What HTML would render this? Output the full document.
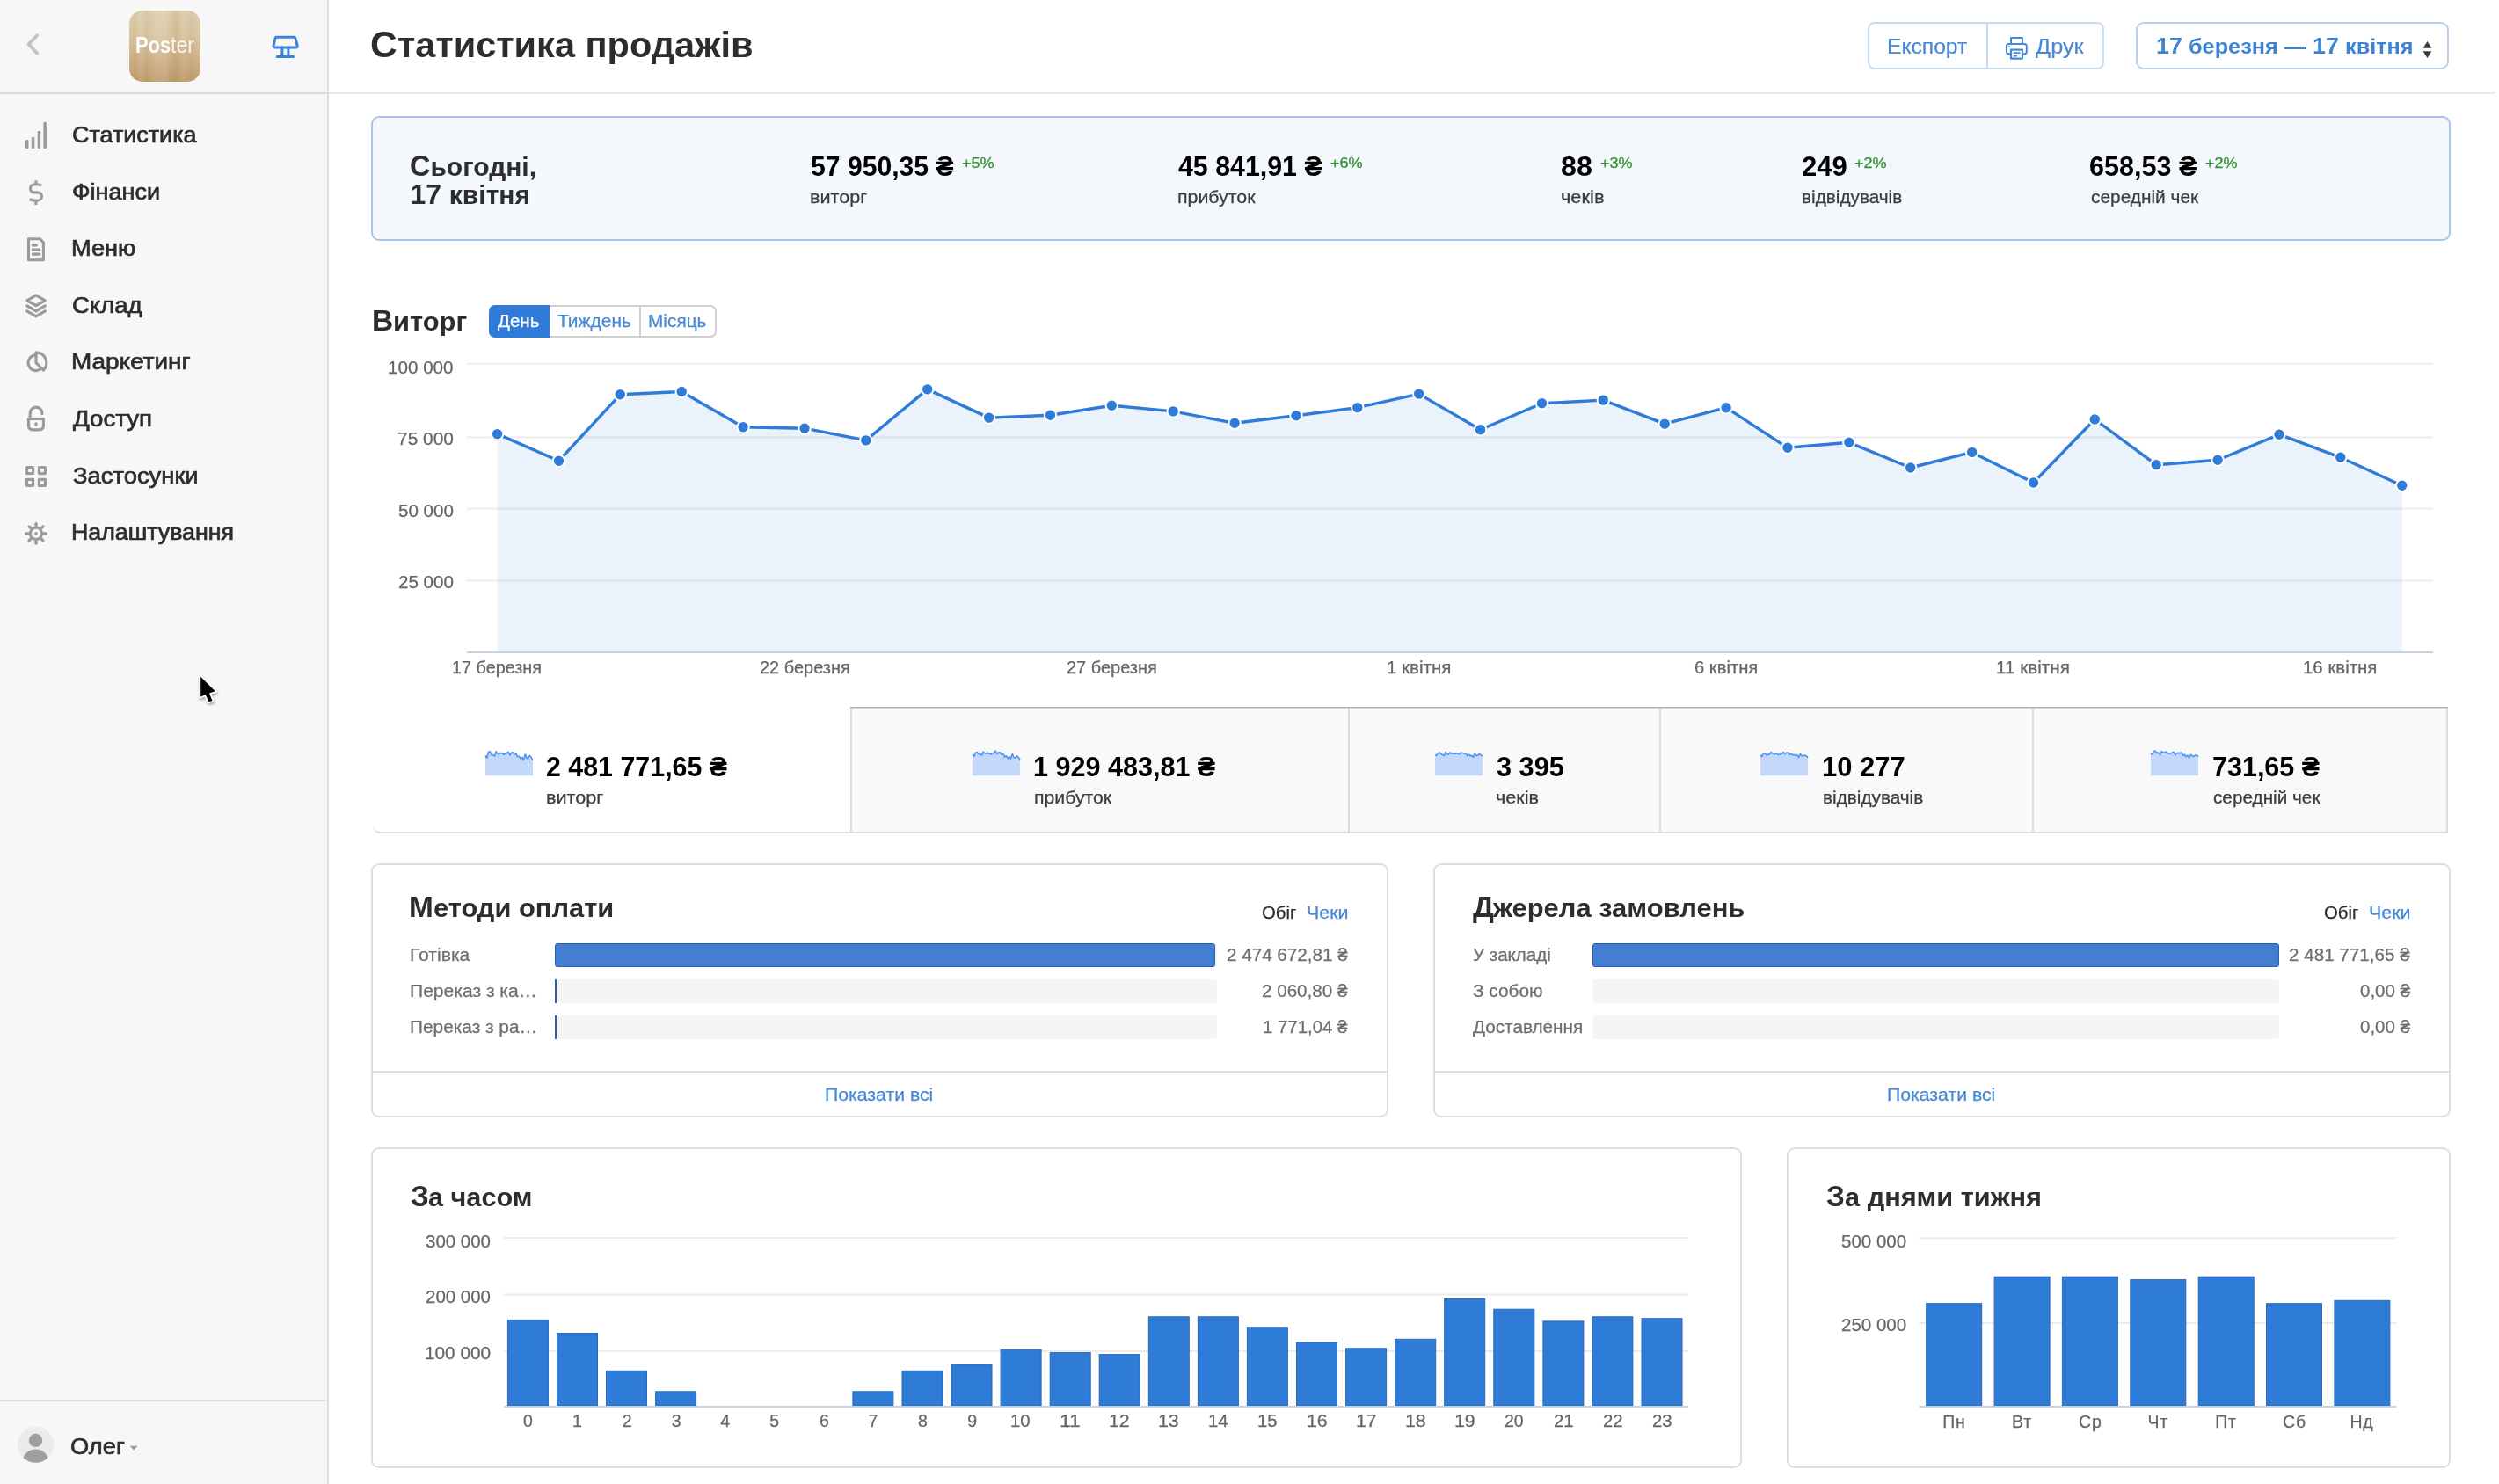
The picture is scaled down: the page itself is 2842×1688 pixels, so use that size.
<!DOCTYPE html>
<html lang="uk"><head><meta charset="utf-8"><title>Статистика продажів</title>
<style>
html,body{margin:0;padding:0;}
body{width:2842px;height:1688px;position:relative;overflow:hidden;background:#fff;font-family:"Liberation Sans",sans-serif;}
.t{position:absolute;white-space:pre;line-height:1;transform-origin:0 0;font-family:"Liberation Sans",sans-serif;}
svg{position:absolute;overflow:visible;}
</style></head><body>
<div style="position:absolute;left:0px;top:0px;width:372px;height:1688px;background:#f7f7f7;"></div>
<div style="position:absolute;left:372px;top:0px;width:2px;height:1688px;background:#dedede;"></div>
<div style="position:absolute;left:0px;top:105px;width:372px;height:2px;background:#dcdcdc;"></div>
<div style="position:absolute;left:0px;top:1592px;width:372px;height:2px;background:#dcdcdc;"></div>
<div style="position:absolute;left:374px;top:105px;width:2464px;height:2px;background:#ebebeb;"></div>
<svg style="left:0;top:0" width="372" height="105"><polyline points="42.2,40.2 32.6,50.4 42.2,60.6" fill="none" stroke="#c3c3c3" stroke-width="3.8" stroke-linecap="round" stroke-linejoin="round"/><g fill="none" stroke="#3b82de" stroke-width="3" stroke-linejoin="round" stroke-linecap="round"><path d="M314.6,42.2 L334.2,42.2 Q335.6,42.2 336,43.6 L338.2,52 Q338.6,54 336.6,54 L312.4,54 Q310.6,54 311,52 L313,43.6 Q313.4,42.2 314.6,42.2 Z"/><path d="M320.9,54 V64.5 M327.9,54 V64.5 M315.2,64.6 H333.6"/></g></svg>
<div style="position:absolute;left:147px;top:12px;width:81px;height:81px;border-radius:15px;overflow:hidden;background:linear-gradient(180deg,#dfcfb0 0%,#dac6a3 35%,#cfb38a 65%,#c19d6e 100%);"><div style="position:absolute;inset:0;background:linear-gradient(90deg,rgba(255,255,255,0) 0%,rgba(120,80,30,.06) 8%,rgba(255,255,255,.05) 16%,rgba(120,80,30,.05) 24%,rgba(255,255,255,.08) 38%,rgba(255,255,255,.1) 50%,rgba(120,80,30,.03) 58%,rgba(120,80,30,.10) 66%,rgba(255,255,255,.04) 76%,rgba(120,80,30,.05) 86%,rgba(255,255,255,.03) 100%);"></div></div>
<svg style="left:0;top:0" width="372" height="700"><g fill="#9b9b9b"><rect x="28.95" y="159.1" width="3.5" height="9.8" rx="1.2"/><rect x="35.8" y="155.8" width="3.5" height="13.1" rx="1.2"/><rect x="42.65" y="148.9" width="3.5" height="20" rx="1.2"/><rect x="49.4" y="138.8" width="3.5" height="30.1" rx="1.2"/></g><g stroke="#9b9b9b" stroke-width="3.1" fill="none" stroke-linecap="butt"><path d="M47.3,211 C44.5,209.95 42.5,209.75 40.5,209.75 C36.5,209.75 34.5,211.8 34.5,214.4 C34.5,217.2 36.6,218.9 40,218.9 L42,218.9 C45.4,218.9 47.45,220.7 47.45,223.5 C47.45,226.3 45.2,228.2 41.5,228.2 C38.5,228.2 36,227.7 33.6,226.8"/><path d="M40.9,205.2 V209.6 M40.9,228.4 V232.9"/></g><g stroke="#9b9b9b" stroke-width="3.1" fill="none" stroke-linejoin="round" stroke-linecap="round"><path d="M32.5,271.7 H45.6 L49.4,275.9 V295.8 H32.5 Z"/><path d="M37.2,278.9 H41.4 M37.2,284.1 H44.7 M37.2,289.1 H44.7"/></g><g stroke="#9b9b9b" stroke-width="3.2" fill="none" stroke-linejoin="round" stroke-linecap="round"><path d="M41,335.8 L51.3,341.8 L41,347.7 L30.7,341.8 Z"/><path d="M30.7,347.9 L41,353.9 L51.3,347.9"/><path d="M30.7,353.9 L41,359.9 L51.3,353.9"/></g><g stroke="#9b9b9b" stroke-width="3.2" fill="none" stroke-linejoin="round" stroke-linecap="round"><path d="M47.2,418.9 A8.8,8.8 0 1 1 41,403.9"/><path d="M41,412.7 V400.9 A11.9,11.9 0 0 1 49.4,421.1 Z"/></g><g stroke="#9b9b9b" stroke-width="3.2" fill="none" stroke-linejoin="round" stroke-linecap="round"><path d="M34.2,476.3 V469.9 A6.85,6.85 0 0 1 47.9,469.9 V470.6"/><path d="M32.5,476.5 H49.4 V484 Q49.4,488.8 44.6,488.8 H37.3 Q32.5,488.8 32.5,484 Z"/></g><ellipse cx="41" cy="482.7" rx="1.8" ry="2.4" fill="#9b9b9b"/><rect x="28.95" y="530" width="10.2" height="10.2" rx="1.7" fill="#9b9b9b"/><rect x="32.1" y="533.15" width="3.9" height="3.9" rx="0.4" fill="#f7f7f7"/><rect x="28.95" y="543.8" width="10.2" height="10.2" rx="1.7" fill="#9b9b9b"/><rect x="32.1" y="546.9499999999999" width="3.9" height="3.9" rx="0.4" fill="#f7f7f7"/><rect x="42.8" y="530" width="10.2" height="10.2" rx="1.7" fill="#9b9b9b"/><rect x="45.949999999999996" y="533.15" width="3.9" height="3.9" rx="0.4" fill="#f7f7f7"/><rect x="42.8" y="543.8" width="10.2" height="10.2" rx="1.7" fill="#9b9b9b"/><rect x="45.949999999999996" y="546.9499999999999" width="3.9" height="3.9" rx="0.4" fill="#f7f7f7"/><g stroke="#9b9b9b" fill="none"><circle cx="41" cy="606.9" r="6.6" stroke-width="3"/><path d="M49.20,606.90 L52.30,606.90 M46.80,612.70 L48.99,614.89 M41.00,615.10 L41.00,618.20 M35.20,612.70 L33.01,614.89 M32.80,606.90 L29.70,606.90 M35.20,601.10 L33.01,598.91 M41.00,598.70 L41.00,595.60 M46.80,601.10 L48.99,598.91 " stroke-width="3.3" stroke-linecap="round"/></g><circle cx="41" cy="606.9" r="1.8" fill="#9b9b9b"/></svg>
<svg style="left:0;top:1594px" width="372" height="94"><defs><clipPath id="av"><circle cx="40.5" cy="49.2" r="20.5"/></clipPath></defs><circle cx="40.5" cy="49.2" r="20.5" fill="#ebebeb"/><g clip-path="url(#av)" fill="#9e9e9e"><circle cx="40.5" cy="44.4" r="7.7"/><ellipse cx="40.5" cy="68" rx="14.6" ry="13.4"/></g><path d="M147.6,50.8 H156.6 L152.1,55.6 Z" fill="#9a9a9a"/></svg>
<svg style="left:200px;top:750px" width="80" height="80"><defs><filter id="cs" x="-50%" y="-50%" width="200%" height="200%"><feGaussianBlur stdDeviation="1.6"/></filter></defs><path d="M28.2,19.8 V42.7 L33.6,39.9 L37.3,48.1 L41.5,47.2 L38,38.4 L44.8,36.3 Z" transform="translate(0.6,2.2)" fill="#000" opacity=".35" filter="url(#cs)" stroke="#000" stroke-width="3"/><path d="M28.2,19.8 V42.7 L33.6,39.9 L37.3,48.1 L41.5,47.2 L38,38.4 L44.8,36.3 Z" fill="#000" stroke="#fff" stroke-width="3.6" stroke-linejoin="round"/><path d="M28.2,19.8 V42.7 L33.6,39.9 L37.3,48.1 L41.5,47.2 L38,38.4 L44.8,36.3 Z" fill="#000"/></svg>
<div style="position:absolute;left:2124px;top:25px;width:265px;height:50px;border:2px solid #c7dbf3;border-radius:8px;"></div>
<div style="position:absolute;left:2259px;top:27px;width:2px;height:50px;background:#c7dbf3;"></div>
<svg style="left:2278px;top:38px" width="32" height="34"><g fill="none" stroke="#4788d8" stroke-width="2" stroke-linejoin="round"><path d="M9,12 V5 H22 V12"/><path d="M9,23.3 H6.6 Q4,23.3 4,20.7 V14.6 Q4,12 6.6,12 H24.2 Q26.8,12 26.8,14.6 V20.7 Q26.8,23.3 24.2,23.3 H22"/><path d="M9,18.6 H22 V28.6 H9 Z" stroke-width="2.2"/><path d="M11.6,22.2 H19.6 M11.6,25.6 H16" stroke-width="1.7"/></g><circle cx="7.1" cy="15.3" r="1.05" fill="#3f7fd0"/></svg>
<div style="position:absolute;left:2429px;top:25px;width:352px;height:50px;border:2px solid #b9d0ec;border-radius:9px;"></div>
<svg style="left:2750px;top:40px" width="24" height="32"><path d="M5.6,14.8 L10.5,7 L15.4,14.8 Z M5.6,18.2 L10.5,26 L15.4,18.2 Z" fill="#3a3a3a"/></svg>
<div style="position:absolute;left:422px;top:132px;width:2361px;height:138px;border:2px solid #a9c4ea;border-radius:9px;background:#f4f7fc;"></div>
<div style="position:absolute;left:556px;top:347px;width:255px;height:33px;border:2px solid #cfcfcf;border-radius:7px;background:#fff;"></div>
<div style="position:absolute;left:727px;top:349px;width:2px;height:33px;background:#cfcfcf;"></div>
<div style="position:absolute;left:556px;top:347px;width:69px;height:37px;background:#2f7bd9;border-radius:7px 0 0 7px;"></div>
<svg style="left:0;top:0" width="2842" height="800"><rect x="531" y="412.8" width="2236" height="2" fill="#ececec"/><rect x="531" y="496.4" width="2236" height="2" fill="#ececec"/><rect x="531" y="577.7" width="2236" height="2" fill="#ececec"/><rect x="531" y="659.5" width="2236" height="2" fill="#ececec"/><polygon points="565.6,741 565.6,493.6 635.5,524.2 705.3,448.8 775.2,445.5 845.1,485.7 915.0,487.2 984.8,500.9 1054.7,442.9 1124.6,475.1 1194.5,472.2 1264.3,461.2 1334.2,467.9 1404.1,481.3 1474.0,472.7 1543.8,463.6 1613.7,448.1 1683.6,488.8 1753.5,458.8 1823.3,455.1 1893.2,482.1 1963.1,463.7 2033.0,509.3 2102.8,503.3 2172.7,532.0 2242.6,514.4 2312.5,549.0 2382.3,477.0 2452.2,528.7 2522.1,523.3 2592.0,494.2 2661.8,520.3 2731.7,552.3 2731.7,741" fill="#2f7bd9" fill-opacity="0.10"/><rect x="531" y="741" width="2236" height="2" fill="#c4d3e3"/><polyline points="565.6,493.6 635.5,524.2 705.3,448.8 775.2,445.5 845.1,485.7 915.0,487.2 984.8,500.9 1054.7,442.9 1124.6,475.1 1194.5,472.2 1264.3,461.2 1334.2,467.9 1404.1,481.3 1474.0,472.7 1543.8,463.6 1613.7,448.1 1683.6,488.8 1753.5,458.8 1823.3,455.1 1893.2,482.1 1963.1,463.7 2033.0,509.3 2102.8,503.3 2172.7,532.0 2242.6,514.4 2312.5,549.0 2382.3,477.0 2452.2,528.7 2522.1,523.3 2592.0,494.2 2661.8,520.3 2731.7,552.3" fill="none" stroke="#2f7bd9" stroke-width="3.4" stroke-linejoin="round" stroke-linecap="round"/><circle cx="565.6" cy="493.6" r="6.7" fill="#2f7bd9" stroke="#fff" stroke-width="2"/><circle cx="635.5" cy="524.2" r="6.7" fill="#2f7bd9" stroke="#fff" stroke-width="2"/><circle cx="705.3" cy="448.8" r="6.7" fill="#2f7bd9" stroke="#fff" stroke-width="2"/><circle cx="775.2" cy="445.5" r="6.7" fill="#2f7bd9" stroke="#fff" stroke-width="2"/><circle cx="845.1" cy="485.7" r="6.7" fill="#2f7bd9" stroke="#fff" stroke-width="2"/><circle cx="915.0" cy="487.2" r="6.7" fill="#2f7bd9" stroke="#fff" stroke-width="2"/><circle cx="984.8" cy="500.9" r="6.7" fill="#2f7bd9" stroke="#fff" stroke-width="2"/><circle cx="1054.7" cy="442.9" r="6.7" fill="#2f7bd9" stroke="#fff" stroke-width="2"/><circle cx="1124.6" cy="475.1" r="6.7" fill="#2f7bd9" stroke="#fff" stroke-width="2"/><circle cx="1194.5" cy="472.2" r="6.7" fill="#2f7bd9" stroke="#fff" stroke-width="2"/><circle cx="1264.3" cy="461.2" r="6.7" fill="#2f7bd9" stroke="#fff" stroke-width="2"/><circle cx="1334.2" cy="467.9" r="6.7" fill="#2f7bd9" stroke="#fff" stroke-width="2"/><circle cx="1404.1" cy="481.3" r="6.7" fill="#2f7bd9" stroke="#fff" stroke-width="2"/><circle cx="1474.0" cy="472.7" r="6.7" fill="#2f7bd9" stroke="#fff" stroke-width="2"/><circle cx="1543.8" cy="463.6" r="6.7" fill="#2f7bd9" stroke="#fff" stroke-width="2"/><circle cx="1613.7" cy="448.1" r="6.7" fill="#2f7bd9" stroke="#fff" stroke-width="2"/><circle cx="1683.6" cy="488.8" r="6.7" fill="#2f7bd9" stroke="#fff" stroke-width="2"/><circle cx="1753.5" cy="458.8" r="6.7" fill="#2f7bd9" stroke="#fff" stroke-width="2"/><circle cx="1823.3" cy="455.1" r="6.7" fill="#2f7bd9" stroke="#fff" stroke-width="2"/><circle cx="1893.2" cy="482.1" r="6.7" fill="#2f7bd9" stroke="#fff" stroke-width="2"/><circle cx="1963.1" cy="463.7" r="6.7" fill="#2f7bd9" stroke="#fff" stroke-width="2"/><circle cx="2033.0" cy="509.3" r="6.7" fill="#2f7bd9" stroke="#fff" stroke-width="2"/><circle cx="2102.8" cy="503.3" r="6.7" fill="#2f7bd9" stroke="#fff" stroke-width="2"/><circle cx="2172.7" cy="532.0" r="6.7" fill="#2f7bd9" stroke="#fff" stroke-width="2"/><circle cx="2242.6" cy="514.4" r="6.7" fill="#2f7bd9" stroke="#fff" stroke-width="2"/><circle cx="2312.5" cy="549.0" r="6.7" fill="#2f7bd9" stroke="#fff" stroke-width="2"/><circle cx="2382.3" cy="477.0" r="6.7" fill="#2f7bd9" stroke="#fff" stroke-width="2"/><circle cx="2452.2" cy="528.7" r="6.7" fill="#2f7bd9" stroke="#fff" stroke-width="2"/><circle cx="2522.1" cy="523.3" r="6.7" fill="#2f7bd9" stroke="#fff" stroke-width="2"/><circle cx="2592.0" cy="494.2" r="6.7" fill="#2f7bd9" stroke="#fff" stroke-width="2"/><circle cx="2661.8" cy="520.3" r="6.7" fill="#2f7bd9" stroke="#fff" stroke-width="2"/><circle cx="2731.7" cy="552.3" r="6.7" fill="#2f7bd9" stroke="#fff" stroke-width="2"/></svg>
<div style="position:absolute;left:967px;top:804px;width:1817px;height:144px;background:#f9f9f9;"></div>
<div style="position:absolute;left:967px;top:804px;width:1817px;height:2px;background:linear-gradient(#a9a9a9,#d6d6d6);"></div>
<div style="position:absolute;left:424px;top:940px;width:560px;height:6px;border-bottom:2px solid #dcdcdc;border-left:0;border-bottom-left-radius:8px;"></div>
<div style="position:absolute;left:967px;top:946px;width:1817px;height:2px;background:#dcdcdc;"></div>
<div style="position:absolute;left:967px;top:806px;width:2px;height:141px;background:#dcdcdc;"></div>
<div style="position:absolute;left:1533px;top:806px;width:2px;height:141px;background:#dcdcdc;"></div>
<div style="position:absolute;left:1886.5px;top:806px;width:2px;height:141px;background:#dcdcdc;"></div>
<div style="position:absolute;left:2311px;top:806px;width:2px;height:141px;background:#dcdcdc;"></div>
<div style="position:absolute;left:2782px;top:806px;width:2px;height:141px;background:#dcdcdc;"></div>
<svg style="left:552px;top:852.5px" width="56" height="30"><polygon points="0,29.3 0.0,6.4 1.7,9.2 3.5,2.2 5.2,1.9 7.0,5.7 8.7,5.8 10.5,7.1 12.2,1.7 13.9,4.7 15.7,4.4 17.4,3.4 19.2,4.0 20.9,5.2 22.6,4.5 24.4,3.6 26.1,2.2 27.9,5.9 29.6,3.2 31.4,2.8 33.1,5.3 34.8,3.6 36.6,7.8 38.3,7.3 40.1,9.9 41.8,8.3 43.5,11.5 45.3,4.8 47.0,9.6 48.8,9.1 50.5,6.4 52.3,8.8 54.0,11.8 54.0,29.3" fill="#c4d8fb"/><polyline points="0.0,6.4 1.7,9.2 3.5,2.2 5.2,1.9 7.0,5.7 8.7,5.8 10.5,7.1 12.2,1.7 13.9,4.7 15.7,4.4 17.4,3.4 19.2,4.0 20.9,5.2 22.6,4.5 24.4,3.6 26.1,2.2 27.9,5.9 29.6,3.2 31.4,2.8 33.1,5.3 34.8,3.6 36.6,7.8 38.3,7.3 40.1,9.9 41.8,8.3 43.5,11.5 45.3,4.8 47.0,9.6 48.8,9.1 50.5,6.4 52.3,8.8 54.0,11.8" fill="none" stroke="#5596f0" stroke-width="1.7" stroke-linejoin="round"/></svg>
<svg style="left:1106px;top:852.5px" width="56" height="30"><polygon points="0,29.3 0.0,5.0 1.7,7.6 3.5,3.0 5.2,2.7 7.0,4.6 8.7,4.9 10.5,6.2 12.2,2.1 13.9,4.2 15.7,3.9 17.4,3.1 19.2,4.4 20.9,5.0 22.6,4.4 24.4,3.0 26.1,1.2 27.9,4.6 29.6,2.9 31.4,2.8 33.1,5.4 34.8,4.3 36.6,8.1 38.3,6.8 40.1,9.5 41.8,7.9 43.5,9.8 45.3,4.5 47.0,8.7 48.8,8.9 50.5,6.9 52.3,8.5 54.0,11.5 54.0,29.3" fill="#c4d8fb"/><polyline points="0.0,5.0 1.7,7.6 3.5,3.0 5.2,2.7 7.0,4.6 8.7,4.9 10.5,6.2 12.2,2.1 13.9,4.2 15.7,3.9 17.4,3.1 19.2,4.4 20.9,5.0 22.6,4.4 24.4,3.0 26.1,1.2 27.9,4.6 29.6,2.9 31.4,2.8 33.1,5.4 34.8,4.3 36.6,8.1 38.3,6.8 40.1,9.5 41.8,7.9 43.5,9.8 45.3,4.5 47.0,8.7 48.8,8.9 50.5,6.9 52.3,8.5 54.0,11.5" fill="none" stroke="#5596f0" stroke-width="1.7" stroke-linejoin="round"/></svg>
<svg style="left:1632px;top:852.5px" width="56" height="30"><polygon points="0,29.3 0.0,5.7 1.7,6.4 3.5,3.6 5.2,3.0 7.0,4.6 8.7,5.8 10.5,6.4 12.2,2.4 13.9,4.9 15.7,4.8 17.4,2.9 19.2,4.2 20.9,4.0 22.6,4.4 24.4,3.7 26.1,4.0 27.9,4.7 29.6,3.0 31.4,3.5 33.1,4.2 34.8,3.6 36.6,6.7 38.3,5.1 40.1,6.6 41.8,6.4 43.5,8.4 45.3,3.8 47.0,6.7 48.8,6.0 50.5,4.5 52.3,5.9 54.0,6.8 54.0,29.3" fill="#c4d8fb"/><polyline points="0.0,5.7 1.7,6.4 3.5,3.6 5.2,3.0 7.0,4.6 8.7,5.8 10.5,6.4 12.2,2.4 13.9,4.9 15.7,4.8 17.4,2.9 19.2,4.2 20.9,4.0 22.6,4.4 24.4,3.7 26.1,4.0 27.9,4.7 29.6,3.0 31.4,3.5 33.1,4.2 34.8,3.6 36.6,6.7 38.3,5.1 40.1,6.6 41.8,6.4 43.5,8.4 45.3,3.8 47.0,6.7 48.8,6.0 50.5,4.5 52.3,5.9 54.0,6.8" fill="none" stroke="#5596f0" stroke-width="1.7" stroke-linejoin="round"/></svg>
<svg style="left:2001.6px;top:852.5px" width="56" height="30"><polygon points="0,29.3 0.0,5.9 1.7,7.6 3.5,3.6 5.2,3.9 7.0,5.9 8.7,5.3 10.5,4.9 12.2,2.5 13.9,4.1 15.7,5.0 17.4,3.9 19.2,4.7 20.9,5.5 22.6,5.2 24.4,4.6 26.1,2.5 27.9,4.6 29.6,3.2 31.4,3.1 33.1,5.5 34.8,4.4 36.6,5.9 38.3,5.4 40.1,6.5 41.8,5.6 43.5,8.8 45.3,4.4 47.0,6.7 48.8,6.8 50.5,6.1 52.3,6.7 54.0,8.9 54.0,29.3" fill="#c4d8fb"/><polyline points="0.0,5.9 1.7,7.6 3.5,3.6 5.2,3.9 7.0,5.9 8.7,5.3 10.5,4.9 12.2,2.5 13.9,4.1 15.7,5.0 17.4,3.9 19.2,4.7 20.9,5.5 22.6,5.2 24.4,4.6 26.1,2.5 27.9,4.6 29.6,3.2 31.4,3.1 33.1,5.5 34.8,4.4 36.6,5.9 38.3,5.4 40.1,6.5 41.8,5.6 43.5,8.8 45.3,4.4 47.0,6.7 48.8,6.8 50.5,6.1 52.3,6.7 54.0,8.9" fill="none" stroke="#5596f0" stroke-width="1.7" stroke-linejoin="round"/></svg>
<svg style="left:2446px;top:852.5px" width="56" height="30"><polygon points="0,29.3 0.0,3.8 1.7,5.1 3.5,1.3 5.2,1.2 7.0,3.3 8.7,3.1 10.5,5.6 12.2,1.9 13.9,2.6 15.7,3.1 17.4,2.1 19.2,4.0 20.9,4.1 22.6,4.1 24.4,3.1 26.1,2.3 27.9,5.5 29.6,3.7 31.4,3.4 33.1,3.6 34.8,3.0 36.6,6.6 38.3,5.1 40.1,7.9 41.8,6.1 43.5,8.9 45.3,5.5 47.0,6.5 48.8,7.6 50.5,6.1 52.3,6.0 54.0,7.9 54.0,29.3" fill="#c4d8fb"/><polyline points="0.0,3.8 1.7,5.1 3.5,1.3 5.2,1.2 7.0,3.3 8.7,3.1 10.5,5.6 12.2,1.9 13.9,2.6 15.7,3.1 17.4,2.1 19.2,4.0 20.9,4.1 22.6,4.1 24.4,3.1 26.1,2.3 27.9,5.5 29.6,3.7 31.4,3.4 33.1,3.6 34.8,3.0 36.6,6.6 38.3,5.1 40.1,7.9 41.8,6.1 43.5,8.9 45.3,5.5 47.0,6.5 48.8,7.6 50.5,6.1 52.3,6.0 54.0,7.9" fill="none" stroke="#5596f0" stroke-width="1.7" stroke-linejoin="round"/></svg>
<div style="position:absolute;left:422px;top:982px;width:1153px;height:285px;border:2px solid #dddddd;border-radius:9px;background:#fff;"></div>
<div style="position:absolute;left:631px;top:1073px;width:752.5px;height:27px;background:#f5f5f5;border-radius:3px;"></div>
<div style="position:absolute;left:631px;top:1073px;width:748.5px;height:25px;background:#427fd3;border:1px solid #2d5ea6;border-radius:3px;"></div>
<div style="position:absolute;left:631px;top:1114px;width:752.5px;height:27px;background:#f5f5f5;border-radius:3px;"></div>
<div style="position:absolute;left:631px;top:1114px;width:2.4px;height:27px;background:#2d5ea6;"></div>
<div style="position:absolute;left:631px;top:1155px;width:752.5px;height:27px;background:#f5f5f5;border-radius:3px;"></div>
<div style="position:absolute;left:631px;top:1155px;width:2.4px;height:27px;background:#2d5ea6;"></div>
<div style="position:absolute;left:424px;top:1218px;width:1153px;height:2px;background:#dddddd;"></div>
<div style="position:absolute;left:1630px;top:982px;width:1153px;height:285px;border:2px solid #dddddd;border-radius:9px;background:#fff;"></div>
<div style="position:absolute;left:1811px;top:1073px;width:781.0px;height:27px;background:#f5f5f5;border-radius:3px;"></div>
<div style="position:absolute;left:1811px;top:1073px;width:778.5px;height:25px;background:#427fd3;border:1px solid #2d5ea6;border-radius:3px;"></div>
<div style="position:absolute;left:1811px;top:1114px;width:781.0px;height:27px;background:#f5f5f5;border-radius:3px;"></div>
<div style="position:absolute;left:1811px;top:1155px;width:781.0px;height:27px;background:#f5f5f5;border-radius:3px;"></div>
<div style="position:absolute;left:1632px;top:1218px;width:1153px;height:2px;background:#dddddd;"></div>
<div style="position:absolute;left:422px;top:1305px;width:1555px;height:361px;border:2px solid #dddddd;border-radius:9px;background:#fff;"></div>
<div style="position:absolute;left:2032px;top:1305px;width:751px;height:361px;border:2px solid #dddddd;border-radius:9px;background:#fff;"></div>
<svg style="left:0;top:1300px" width="2842" height="388"><rect x="573.0" y="107.0" width="1347.0" height="2.0" fill="#ececec" /><rect x="573.0" y="171.6" width="1347.0" height="2.0" fill="#ececec" /><rect x="573.0" y="236.0" width="1347.0" height="2.0" fill="#ececec" /><rect x="577.4" y="201.4" width="46.0" height="97.6" fill="#2f7bd8" stroke="#2c69b6" stroke-width="1"/><rect x="633.5" y="216.5" width="46.0" height="82.5" fill="#2f7bd8" stroke="#2c69b6" stroke-width="1"/><rect x="689.5" y="259.3" width="46.0" height="39.7" fill="#2f7bd8" stroke="#2c69b6" stroke-width="1"/><rect x="745.6" y="282.8" width="46.0" height="16.2" fill="#2f7bd8" stroke="#2c69b6" stroke-width="1"/><rect x="969.9" y="282.8" width="46.0" height="16.2" fill="#2f7bd8" stroke="#2c69b6" stroke-width="1"/><rect x="1026.0" y="259.3" width="46.0" height="39.7" fill="#2f7bd8" stroke="#2c69b6" stroke-width="1"/><rect x="1082.0" y="252.6" width="46.0" height="46.4" fill="#2f7bd8" stroke="#2c69b6" stroke-width="1"/><rect x="1138.1" y="235.3" width="46.0" height="63.7" fill="#2f7bd8" stroke="#2c69b6" stroke-width="1"/><rect x="1194.2" y="238.6" width="46.0" height="60.4" fill="#2f7bd8" stroke="#2c69b6" stroke-width="1"/><rect x="1250.2" y="240.6" width="46.0" height="58.4" fill="#2f7bd8" stroke="#2c69b6" stroke-width="1"/><rect x="1306.3" y="197.8" width="46.0" height="101.2" fill="#2f7bd8" stroke="#2c69b6" stroke-width="1"/><rect x="1362.4" y="197.8" width="46.0" height="101.2" fill="#2f7bd8" stroke="#2c69b6" stroke-width="1"/><rect x="1418.4" y="209.8" width="46.0" height="89.2" fill="#2f7bd8" stroke="#2c69b6" stroke-width="1"/><rect x="1474.5" y="226.9" width="46.0" height="72.1" fill="#2f7bd8" stroke="#2c69b6" stroke-width="1"/><rect x="1530.6" y="233.8" width="46.0" height="65.2" fill="#2f7bd8" stroke="#2c69b6" stroke-width="1"/><rect x="1586.7" y="223.3" width="46.0" height="75.7" fill="#2f7bd8" stroke="#2c69b6" stroke-width="1"/><rect x="1642.7" y="177.4" width="46.0" height="121.6" fill="#2f7bd8" stroke="#2c69b6" stroke-width="1"/><rect x="1698.8" y="189.2" width="46.0" height="109.8" fill="#2f7bd8" stroke="#2c69b6" stroke-width="1"/><rect x="1754.9" y="202.9" width="46.0" height="96.1" fill="#2f7bd8" stroke="#2c69b6" stroke-width="1"/><rect x="1810.9" y="197.8" width="46.0" height="101.2" fill="#2f7bd8" stroke="#2c69b6" stroke-width="1"/><rect x="1867.0" y="199.7" width="46.0" height="99.3" fill="#2f7bd8" stroke="#2c69b6" stroke-width="1"/><rect x="573.0" y="299.0" width="1347.0" height="2.0" fill="#c4d3e3" /><rect x="2183.0" y="107.2" width="542.5" height="2.0" fill="#ececec" /><rect x="2183.0" y="204.0" width="542.5" height="2.0" fill="#ececec" /><rect x="2190.7" y="182.7" width="63.0" height="116.3" fill="#2f7bd8" stroke="#2c69b6" stroke-width="1"/><rect x="2268.1" y="152.2" width="63.0" height="146.8" fill="#2f7bd8" stroke="#2c69b6" stroke-width="1"/><rect x="2345.4" y="152.2" width="63.0" height="146.8" fill="#2f7bd8" stroke="#2c69b6" stroke-width="1"/><rect x="2422.8" y="155.6" width="63.0" height="143.4" fill="#2f7bd8" stroke="#2c69b6" stroke-width="1"/><rect x="2500.2" y="152.2" width="63.0" height="146.8" fill="#2f7bd8" stroke="#2c69b6" stroke-width="1"/><rect x="2577.5" y="182.7" width="63.0" height="116.3" fill="#2f7bd8" stroke="#2c69b6" stroke-width="1"/><rect x="2654.9" y="179.3" width="63.0" height="119.7" fill="#2f7bd8" stroke="#2c69b6" stroke-width="1"/><rect x="2183.0" y="299.0" width="542.5" height="2.0" fill="#c4d3e3" /></svg>
<div id="tx" style="position:absolute;left:0;top:0;width:2842px;height:1688px;will-change:transform;">
<span class="t" style="left:154.18px;top:38px;font-size:26.5px;color:#fff;font-weight:700;transform:scaleX(0.8237);">Pos</span>
<span class="t" style="left:194.40px;top:38px;font-size:26px;color:rgba(255,255,255,.85);transform:scaleX(0.8930);">ter</span>
<span class="t" style="left:82.43px;top:140px;font-size:26px;color:#2d2d2d;transform:scaleX(1.0366);-webkit-text-stroke:0.7px #2d2d2d;">Статистика</span>
<span class="t" style="left:82.42px;top:205px;font-size:26px;color:#2d2d2d;transform:scaleX(1.0390);-webkit-text-stroke:0.7px #2d2d2d;">Фінанси</span>
<span class="t" style="left:81.38px;top:269px;font-size:26px;color:#2d2d2d;transform:scaleX(1.0443);-webkit-text-stroke:0.7px #2d2d2d;">Меню</span>
<span class="t" style="left:82.41px;top:334px;font-size:26px;color:#2d2d2d;transform:scaleX(1.0579);-webkit-text-stroke:0.7px #2d2d2d;">Склад</span>
<span class="t" style="left:81.33px;top:398px;font-size:26px;color:#2d2d2d;transform:scaleX(1.0736);-webkit-text-stroke:0.7px #2d2d2d;">Маркетинг</span>
<span class="t" style="left:83.47px;top:463px;font-size:26px;color:#2d2d2d;transform:scaleX(1.0646);-webkit-text-stroke:0.7px #2d2d2d;">Доступ</span>
<span class="t" style="left:83.47px;top:528px;font-size:26px;color:#2d2d2d;transform:scaleX(1.0529);-webkit-text-stroke:0.7px #2d2d2d;">Застосунки</span>
<span class="t" style="left:81.40px;top:592px;font-size:26px;color:#2d2d2d;transform:scaleX(1.0298);-webkit-text-stroke:0.7px #2d2d2d;">Налаштування</span>
<span class="t" style="left:80.12px;top:1632px;font-size:26px;color:#2d2d2d;transform:scaleX(1.0470);-webkit-text-stroke:0.7px #2d2d2d;">Олег</span>
<span class="t" style="left:421.39px;top:30px;font-size:42.0px;color:#2d2d2d;font-weight:700;transform:scaleX(1.0119);">С</span>
<span class="t" style="left:452.08px;top:31px;font-size:41px;color:#2d2d2d;font-weight:700;transform:scaleX(1.0119);">татистика продажів</span>
<span class="t" style="left:2146.28px;top:41px;font-size:24px;color:#4788d8;transform:scaleX(1.0268);-webkit-text-stroke:0.2px #4788d8;">Експорт</span>
<span class="t" style="left:2314.91px;top:41px;font-size:24px;color:#4788d8;transform:scaleX(1.0546);-webkit-text-stroke:0.2px #4788d8;">Друк</span>
<span class="t" style="left:2451.87px;top:39px;font-size:26.0px;color:#3d83d3;font-weight:700;transform:scaleX(1.0314);">17&nbsp;</span>
<span class="t" style="left:2489.15px;top:41px;font-size:24.5px;color:#3d83d3;font-weight:700;transform:scaleX(1.0314);">березня&nbsp;—&nbsp;</span>
<span class="t" style="left:2630.17px;top:39px;font-size:26.0px;color:#3d83d3;font-weight:700;transform:scaleX(1.0314);">17&nbsp;</span>
<span class="t" style="left:2667.45px;top:41px;font-size:24.5px;color:#3d83d3;font-weight:700;transform:scaleX(1.0314);">квітня</span>
<span class="t" style="left:465.90px;top:173px;font-size:32.5px;color:#2d2d2d;font-weight:700;">С</span>
<span class="t" style="left:489.41px;top:175px;font-size:30px;color:#2d2d2d;font-weight:700;">ьогодні,</span>
<span class="t" style="left:466.40px;top:205px;font-size:32.0px;color:#2d2d2d;font-weight:700;">17&nbsp;</span>
<span class="t" style="left:510.86px;top:207px;font-size:30px;color:#2d2d2d;font-weight:700;">квітня</span>
<span class="t" style="left:921.60px;top:173px;font-size:32.0px;color:#000;font-weight:700;transform:scaleX(0.9417);">57 950,35 ₴</span>
<span class="t" style="left:1094.14px;top:177px;font-size:16.5px;color:#2f922f;transform:scaleX(1.0951);-webkit-text-stroke:0.25px #2f922f;">+5%</span>
<span class="t" style="left:920.65px;top:214px;font-size:20px;color:#3c3c3c;transform:scaleX(1.0806);-webkit-text-stroke:0.25px #3c3c3c;">виторг</span>
<span class="t" style="left:1340.00px;top:173px;font-size:32.0px;color:#000;font-weight:700;transform:scaleX(0.9480);">45 841,91 ₴</span>
<span class="t" style="left:1513.04px;top:177px;font-size:16.5px;color:#2f922f;transform:scaleX(1.0951);-webkit-text-stroke:0.25px #2f922f;">+6%</span>
<span class="t" style="left:1339.07px;top:214px;font-size:20px;color:#3c3c3c;transform:scaleX(1.0673);-webkit-text-stroke:0.25px #3c3c3c;">прибуток</span>
<span class="t" style="left:1775.19px;top:173px;font-size:32.0px;color:#000;font-weight:700;transform:scaleX(1.0060);">88</span>
<span class="t" style="left:1819.54px;top:177px;font-size:16.5px;color:#2f922f;transform:scaleX(1.0951);-webkit-text-stroke:0.25px #2f922f;">+3%</span>
<span class="t" style="left:1775.25px;top:214px;font-size:20px;color:#3c3c3c;transform:scaleX(1.0912);-webkit-text-stroke:0.25px #3c3c3c;">чеків</span>
<span class="t" style="left:2049.33px;top:173px;font-size:32.0px;color:#000;font-weight:700;transform:scaleX(0.9691);">249</span>
<span class="t" style="left:2109.14px;top:177px;font-size:16.5px;color:#2f922f;transform:scaleX(1.0951);-webkit-text-stroke:0.25px #2f922f;">+2%</span>
<span class="t" style="left:2049.39px;top:214px;font-size:20px;color:#3c3c3c;transform:scaleX(1.0380);-webkit-text-stroke:0.25px #3c3c3c;">відвідувачів</span>
<span class="t" style="left:2376.44px;top:173px;font-size:32.0px;color:#000;font-weight:700;transform:scaleX(0.9553);">658,53 ₴</span>
<span class="t" style="left:2507.54px;top:177px;font-size:16.5px;color:#2f922f;transform:scaleX(1.0951);-webkit-text-stroke:0.25px #2f922f;">+2%</span>
<span class="t" style="left:2377.53px;top:214px;font-size:20px;color:#3c3c3c;transform:scaleX(1.0433);-webkit-text-stroke:0.25px #3c3c3c;">середній чек</span>
<span class="t" style="left:422.94px;top:349px;font-size:32.5px;color:#2d2d2d;font-weight:700;transform:scaleX(1.0305);">В</span>
<span class="t" style="left:447.13px;top:351px;font-size:30px;color:#2d2d2d;font-weight:700;transform:scaleX(1.0305);">иторг</span>
<span class="t" style="left:566.13px;top:355px;font-size:20.5px;color:#fff;transform:scaleX(1.0031);-webkit-text-stroke:0.25px #fff;">День</span>
<span class="t" style="left:633.73px;top:355px;font-size:20.5px;color:#4788d8;transform:scaleX(1.0206);-webkit-text-stroke:0.25px #4788d8;">Тиждень</span>
<span class="t" style="left:737.11px;top:355px;font-size:20.5px;color:#4788d8;transform:scaleX(1.0160);-webkit-text-stroke:0.25px #4788d8;">Місяць</span>
<span class="t" style="left:441.37px;top:409px;font-size:19.5px;color:#666666;transform:scaleX(1.0573);-webkit-text-stroke:0.25px #666666;">100 000</span>
<span class="t" style="left:451.96px;top:490px;font-size:19.5px;color:#666666;transform:scaleX(1.0720);-webkit-text-stroke:0.25px #666666;">75 000</span>
<span class="t" style="left:453.03px;top:572px;font-size:19.5px;color:#666666;transform:scaleX(1.0542);-webkit-text-stroke:0.25px #666666;">50 000</span>
<span class="t" style="left:453.03px;top:653px;font-size:19.5px;color:#666666;transform:scaleX(1.0542);-webkit-text-stroke:0.25px #666666;">25 000</span>
<span class="t" style="left:514.36px;top:750px;font-size:19.5px;color:#666666;transform:scaleX(1.0159);-webkit-text-stroke:0.25px #666666;">17 березня</span>
<span class="t" style="left:863.85px;top:750px;font-size:19.5px;color:#666666;transform:scaleX(1.0237);-webkit-text-stroke:0.25px #666666;">22 березня</span>
<span class="t" style="left:1213.22px;top:750px;font-size:19.5px;color:#666666;transform:scaleX(1.0237);-webkit-text-stroke:0.25px #666666;">27 березня</span>
<span class="t" style="left:1576.79px;top:750px;font-size:19.5px;color:#666666;transform:scaleX(1.0521);-webkit-text-stroke:0.25px #666666;">1 квітня</span>
<span class="t" style="left:1927.21px;top:750px;font-size:19.5px;color:#666666;transform:scaleX(1.0369);-webkit-text-stroke:0.25px #666666;">6 квітня</span>
<span class="t" style="left:2270.28px;top:750px;font-size:19.5px;color:#666666;transform:scaleX(1.0600);-webkit-text-stroke:0.25px #666666;">11 квітня</span>
<span class="t" style="left:2619.41px;top:750px;font-size:19.5px;color:#666666;transform:scaleX(1.0469);-webkit-text-stroke:0.25px #666666;">16 квітня</span>
<span class="t" style="left:621.15px;top:856px;font-size:32.0px;color:#000;font-weight:700;transform:scaleX(0.9493);">2 481 771,65 ₴</span>
<span class="t" style="left:621.15px;top:897px;font-size:20px;color:#3c3c3c;transform:scaleX(1.0806);-webkit-text-stroke:0.25px #3c3c3c;">виторг</span>
<span class="t" style="left:1175.09px;top:856px;font-size:32.0px;color:#000;font-weight:700;transform:scaleX(0.9547);">1 929 483,81 ₴</span>
<span class="t" style="left:1176.07px;top:897px;font-size:20px;color:#3c3c3c;transform:scaleX(1.0625);-webkit-text-stroke:0.25px #3c3c3c;">прибуток</span>
<span class="t" style="left:1701.90px;top:856px;font-size:32.0px;color:#000;font-weight:700;transform:scaleX(0.9586);">3 395</span>
<span class="t" style="left:1700.95px;top:897px;font-size:20px;color:#3c3c3c;transform:scaleX(1.0822);-webkit-text-stroke:0.25px #3c3c3c;">чеків</span>
<span class="t" style="left:2071.76px;top:856px;font-size:32.0px;color:#000;font-weight:700;transform:scaleX(0.9676);">10 277</span>
<span class="t" style="left:2072.79px;top:897px;font-size:20px;color:#3c3c3c;transform:scaleX(1.0380);-webkit-text-stroke:0.25px #3c3c3c;">відвідувачів</span>
<span class="t" style="left:2516.05px;top:856px;font-size:32.0px;color:#000;font-weight:700;transform:scaleX(0.9529);">731,65 ₴</span>
<span class="t" style="left:2517.13px;top:897px;font-size:20px;color:#3c3c3c;transform:scaleX(1.0373);-webkit-text-stroke:0.25px #3c3c3c;">середній чек</span>
<span class="t" style="left:465.14px;top:1016px;font-size:32.5px;color:#2d2d2d;font-weight:700;transform:scaleX(1.0278);">М</span>
<span class="t" style="left:492.97px;top:1018px;font-size:30px;color:#2d2d2d;font-weight:700;transform:scaleX(1.0278);">етоди оплати</span>
<span class="t" style="left:1435.13px;top:1028px;font-size:20px;color:#2d2d2d;transform:scaleX(1.0180);-webkit-text-stroke:0.25px #2d2d2d;">Обіг</span>
<span class="t" style="left:1486.26px;top:1028px;font-size:20px;color:#4788d8;transform:scaleX(1.0694);-webkit-text-stroke:0.25px #4788d8;">Чеки</span>
<span class="t" style="left:466.28px;top:1076px;font-size:20px;color:#6e6e6e;transform:scaleX(1.0564);-webkit-text-stroke:0.25px #6e6e6e;">Готівка</span>
<span class="t" style="left:1395.00px;top:1076px;font-size:20px;color:#6e6e6e;transform:scaleX(1.0310);-webkit-text-stroke:0.25px #6e6e6e;">2 474 672,81 ₴</span>
<span class="t" style="left:466.28px;top:1117px;font-size:20px;color:#6e6e6e;transform:scaleX(1.0523);-webkit-text-stroke:0.25px #6e6e6e;">Переказ з ка…</span>
<span class="t" style="left:1435.20px;top:1117px;font-size:20px;color:#6e6e6e;transform:scaleX(1.0303);-webkit-text-stroke:0.25px #6e6e6e;">2 060,80 ₴</span>
<span class="t" style="left:466.29px;top:1158px;font-size:20px;color:#6e6e6e;transform:scaleX(1.0418);-webkit-text-stroke:0.25px #6e6e6e;">Переказ з ра…</span>
<span class="t" style="left:1436.21px;top:1158px;font-size:20px;color:#6e6e6e;transform:scaleX(1.0197);-webkit-text-stroke:0.25px #6e6e6e;">1 771,04 ₴</span>
<span class="t" style="left:937.57px;top:1235px;font-size:20px;color:#4788d8;transform:scaleX(1.0611);-webkit-text-stroke:0.25px #4788d8;">Показати всі</span>
<span class="t" style="left:1674.50px;top:1016px;font-size:32.5px;color:#2d2d2d;font-weight:700;transform:scaleX(1.0302);">Д</span>
<span class="t" style="left:1698.35px;top:1018px;font-size:30px;color:#2d2d2d;font-weight:700;transform:scaleX(1.0302);">жерела замовлень</span>
<span class="t" style="left:2642.83px;top:1028px;font-size:20px;color:#2d2d2d;transform:scaleX(1.0180);-webkit-text-stroke:0.25px #2d2d2d;">Обіг</span>
<span class="t" style="left:2693.96px;top:1028px;font-size:20px;color:#4788d8;transform:scaleX(1.0694);-webkit-text-stroke:0.25px #4788d8;">Чеки</span>
<span class="t" style="left:1674.63px;top:1076px;font-size:20px;color:#6e6e6e;transform:scaleX(1.0273);-webkit-text-stroke:0.25px #6e6e6e;">У закладі</span>
<span class="t" style="left:2603.00px;top:1076px;font-size:20px;color:#6e6e6e;transform:scaleX(1.0310);-webkit-text-stroke:0.25px #6e6e6e;">2 481 771,65 ₴</span>
<span class="t" style="left:1674.63px;top:1117px;font-size:20px;color:#6e6e6e;transform:scaleX(1.0415);-webkit-text-stroke:0.25px #6e6e6e;">З собою</span>
<span class="t" style="left:2683.53px;top:1117px;font-size:20px;color:#6e6e6e;transform:scaleX(1.0263);-webkit-text-stroke:0.25px #6e6e6e;">0,00 ₴</span>
<span class="t" style="left:1674.63px;top:1158px;font-size:20px;color:#6e6e6e;transform:scaleX(1.0353);-webkit-text-stroke:0.25px #6e6e6e;">Доставлення</span>
<span class="t" style="left:2683.53px;top:1158px;font-size:20px;color:#6e6e6e;transform:scaleX(1.0263);-webkit-text-stroke:0.25px #6e6e6e;">0,00 ₴</span>
<span class="t" style="left:2145.67px;top:1235px;font-size:20px;color:#4788d8;transform:scaleX(1.0611);-webkit-text-stroke:0.25px #4788d8;">Показати всі</span>
<span class="t" style="left:466.60px;top:1345px;font-size:32.5px;color:#2d2d2d;font-weight:700;transform:scaleX(1.0215);">З</span>
<span class="t" style="left:487.40px;top:1347px;font-size:30px;color:#2d2d2d;font-weight:700;transform:scaleX(1.0215);">а часом</span>
<span class="t" style="left:2076.80px;top:1345px;font-size:32.5px;color:#2d2d2d;font-weight:700;transform:scaleX(1.0242);">З</span>
<span class="t" style="left:2097.65px;top:1347px;font-size:30px;color:#2d2d2d;font-weight:700;transform:scaleX(1.0242);">а днями тижня</span>
<span class="t" style="left:483.83px;top:1403px;font-size:19.5px;color:#666666;transform:scaleX(1.0495);-webkit-text-stroke:0.25px #666666;">300 000</span>
<span class="t" style="left:483.83px;top:1466px;font-size:19.5px;color:#666666;transform:scaleX(1.0495);-webkit-text-stroke:0.25px #666666;">200 000</span>
<span class="t" style="left:482.77px;top:1530px;font-size:19.5px;color:#666666;transform:scaleX(1.0645);-webkit-text-stroke:0.25px #666666;">100 000</span>
<span class="t" style="left:595.00px;top:1607px;font-size:19.5px;color:#666666;-webkit-text-stroke:0.25px #666666;">0</span>
<span class="t" style="left:651.07px;top:1607px;font-size:19.5px;color:#666666;-webkit-text-stroke:0.25px #666666;">1</span>
<span class="t" style="left:707.64px;top:1607px;font-size:19.5px;color:#666666;-webkit-text-stroke:0.25px #666666;">2</span>
<span class="t" style="left:763.71px;top:1607px;font-size:19.5px;color:#666666;-webkit-text-stroke:0.25px #666666;">3</span>
<span class="t" style="left:819.28px;top:1607px;font-size:19.5px;color:#666666;-webkit-text-stroke:0.25px #666666;">4</span>
<span class="t" style="left:875.35px;top:1607px;font-size:19.5px;color:#666666;-webkit-text-stroke:0.25px #666666;">5</span>
<span class="t" style="left:931.92px;top:1607px;font-size:19.5px;color:#666666;-webkit-text-stroke:0.25px #666666;">6</span>
<span class="t" style="left:987.49px;top:1607px;font-size:19.5px;color:#666666;-webkit-text-stroke:0.25px #666666;">7</span>
<span class="t" style="left:1044.06px;top:1607px;font-size:19.5px;color:#666666;-webkit-text-stroke:0.25px #666666;">8</span>
<span class="t" style="left:1100.13px;top:1607px;font-size:19.5px;color:#666666;-webkit-text-stroke:0.25px #666666;">9</span>
<span class="t" style="left:1149.29px;top:1607px;font-size:19.5px;color:#666666;transform:scaleX(1.0429);-webkit-text-stroke:0.25px #666666;">10</span>
<span class="t" style="left:1205.24px;top:1607px;font-size:19.5px;color:#666666;transform:scaleX(1.1798);-webkit-text-stroke:0.25px #666666;">11</span>
<span class="t" style="left:1261.38px;top:1607px;font-size:19.5px;color:#666666;transform:scaleX(1.0948);-webkit-text-stroke:0.25px #666666;">12</span>
<span class="t" style="left:1317.45px;top:1607px;font-size:19.5px;color:#666666;transform:scaleX(1.0948);-webkit-text-stroke:0.25px #666666;">13</span>
<span class="t" style="left:1373.57px;top:1607px;font-size:19.5px;color:#666666;transform:scaleX(1.0429);-webkit-text-stroke:0.25px #666666;">14</span>
<span class="t" style="left:1429.64px;top:1607px;font-size:19.5px;color:#666666;transform:scaleX(1.0429);-webkit-text-stroke:0.25px #666666;">15</span>
<span class="t" style="left:1485.66px;top:1607px;font-size:19.5px;color:#666666;transform:scaleX(1.0948);-webkit-text-stroke:0.25px #666666;">16</span>
<span class="t" style="left:1541.73px;top:1607px;font-size:19.5px;color:#666666;transform:scaleX(1.0948);-webkit-text-stroke:0.25px #666666;">17</span>
<span class="t" style="left:1597.80px;top:1607px;font-size:19.5px;color:#666666;transform:scaleX(1.0948);-webkit-text-stroke:0.25px #666666;">18</span>
<span class="t" style="left:1653.87px;top:1607px;font-size:19.5px;color:#666666;transform:scaleX(1.0948);-webkit-text-stroke:0.25px #666666;">19</span>
<span class="t" style="left:1711.02px;top:1607px;font-size:19.5px;color:#666666;transform:scaleX(0.9957);-webkit-text-stroke:0.25px #666666;">20</span>
<span class="t" style="left:1767.10px;top:1607px;font-size:19.5px;color:#666666;transform:scaleX(1.0429);-webkit-text-stroke:0.25px #666666;">21</span>
<span class="t" style="left:1823.17px;top:1607px;font-size:19.5px;color:#666666;transform:scaleX(1.0429);-webkit-text-stroke:0.25px #666666;">22</span>
<span class="t" style="left:1879.24px;top:1607px;font-size:19.5px;color:#666666;transform:scaleX(1.0429);-webkit-text-stroke:0.25px #666666;">23</span>
<span class="t" style="left:2093.93px;top:1403px;font-size:19.5px;color:#666666;transform:scaleX(1.0509);-webkit-text-stroke:0.25px #666666;">500 000</span>
<span class="t" style="left:2093.93px;top:1498px;font-size:19.5px;color:#666666;transform:scaleX(1.0509);-webkit-text-stroke:0.25px #666666;">250 000</span>
<span class="t" style="left:2209.29px;top:1608px;font-size:19.5px;color:#666666;letter-spacing:0.800px;-webkit-text-stroke:0.25px #666666;">Пн</span>
<span class="t" style="left:2287.99px;top:1608px;font-size:19.5px;color:#666666;letter-spacing:0.800px;-webkit-text-stroke:0.25px #666666;">Вт</span>
<span class="t" style="left:2364.00px;top:1608px;font-size:19.5px;color:#666666;letter-spacing:0.800px;-webkit-text-stroke:0.25px #666666;">Ср</span>
<span class="t" style="left:2442.41px;top:1608px;font-size:19.5px;color:#666666;letter-spacing:0.800px;-webkit-text-stroke:0.25px #666666;">Чт</span>
<span class="t" style="left:2519.27px;top:1608px;font-size:19.5px;color:#666666;letter-spacing:0.800px;-webkit-text-stroke:0.25px #666666;">Пт</span>
<span class="t" style="left:2596.11px;top:1608px;font-size:19.5px;color:#666666;letter-spacing:0.800px;-webkit-text-stroke:0.25px #666666;">Сб</span>
<span class="t" style="left:2672.48px;top:1608px;font-size:19.5px;color:#666666;letter-spacing:0.800px;-webkit-text-stroke:0.25px #666666;">Нд</span>
</div>
</body></html>
